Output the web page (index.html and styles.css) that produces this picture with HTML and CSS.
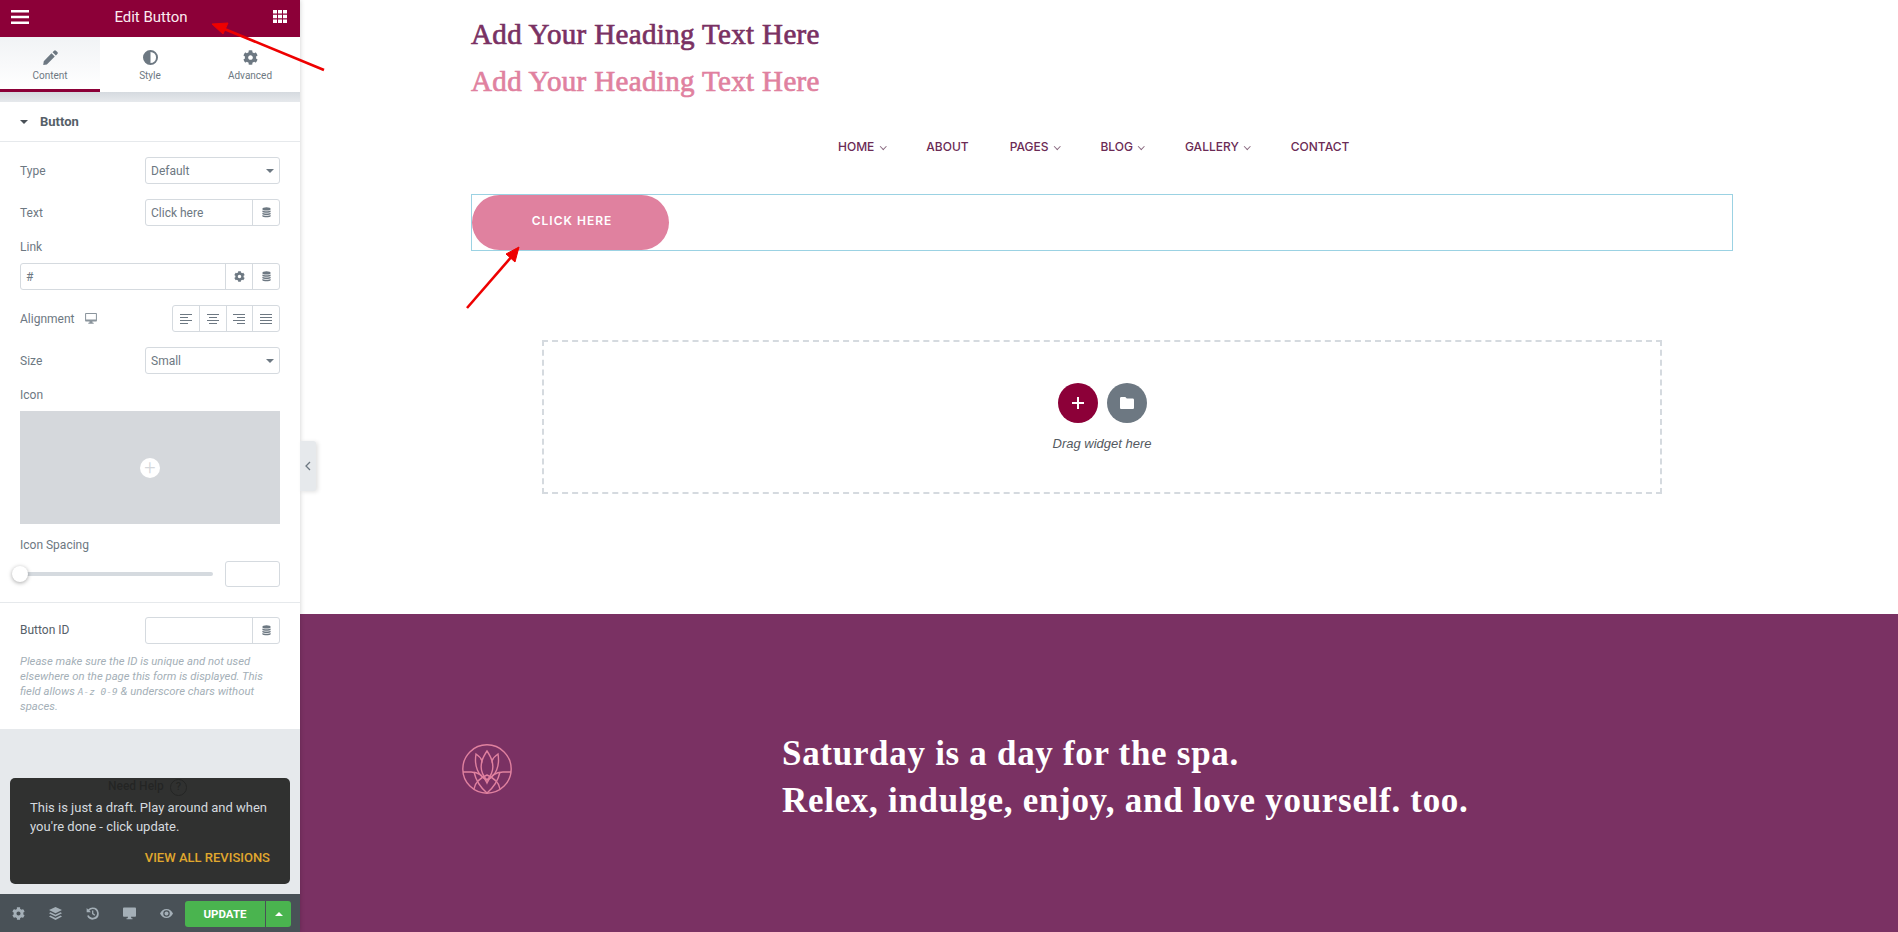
FILE: index.html
```html
<!DOCTYPE html>
<html lang="en">
<head>
  <meta charset="UTF-8">
  <meta name="viewport" content="width=device-width, initial-scale=1.0">
  <title>Edit Button</title>
  <link rel="stylesheet" href="styles.css">
</head>
<body>
  <svg class="sprite" width="0" height="0">
    <symbol id="gear" viewBox="0 0 512 512"><path d="M487.4 315.7l-42.6-24.6c4.3-23.2 4.3-47 0-70.2l42.6-24.6c4.9-2.8 7.1-8.6 5.5-14-11.1-35.6-30-67.8-54.7-94.6-3.8-4.1-10-5.1-14.8-2.3L380.8 110c-17.9-15.4-38.5-27.3-60.8-35.1V25.8c0-5.6-3.9-10.5-9.4-11.7-36.7-8.2-74.3-7.8-109.2 0-5.5 1.2-9.4 6.1-9.4 11.7V75c-22.2 7.9-42.8 19.8-60.8 35.1L88.7 85.5c-4.9-2.8-11-1.9-14.8 2.3-24.7 26.7-43.6 58.9-54.7 94.6-1.7 5.4.6 11.2 5.5 14L67.3 221c-4.3 23.2-4.3 47 0 70.2l-42.6 24.6c-4.9 2.8-7.1 8.6-5.5 14 11.1 35.6 30 67.8 54.7 94.6 3.8 4.1 10 5.1 14.8 2.3l42.6-24.6c17.9 15.4 38.5 27.3 60.8 35.1v49.2c0 5.6 3.9 10.5 9.4 11.7 36.7 8.2 74.3 7.8 109.2 0 5.5-1.2 9.4-6.1 9.4-11.7v-49.2c22.2-7.9 42.8-19.8 60.8-35.1l42.6 24.6c4.9 2.8 11 1.9 14.8-2.3 24.7-26.7 43.6-58.9 54.7-94.6 1.5-5.5-.7-11.3-5.6-14.1zM256 336c-44.1 0-80-35.9-80-80s35.9-80 80-80 80 35.9 80 80-35.9 80-80 80z"/></symbol>
    <symbol id="database" viewBox="0 0 12 14"><ellipse cx="6" cy="2.2" rx="5.500" ry="2.200"/><path d="M.5 4.400c1 1.300 10 1.300 11 0v1.500c-.6 1.700-10.400 1.700-11 0zM.5 7.400c1 1.300 10 1.300 11 0v1.500c-.6 1.700-10.400 1.700-11 0zM.5 10.400c1 1.300 10 1.300 11 0V12c-.6 1.700-10.400 1.700-11 0z"/></symbol>
    <symbol id="desktop" viewBox="0 0 14 13"><path d="M1.200 0h11.600C13.500 0 14 .5 14 1.200v7.600c0 .7-.5 1.200-1.200 1.200H8.600l.4 1.600h1.200v1.200H3.800v-1.200H5l.4-1.600H1.200C.5 10 0 9.500 0 8.800V1.200C0 .5.500 0 1.200 0zM1.200 1.200v6.600h11.600V1.200z"/></symbol>
  </svg>

  <div class="app">
    <aside class="panel">
      <header class="panel-head">
        <svg class="head-icon" viewBox="0 0 18 14"><path d="M0 0h18v2.600H0zM0 5.700h18v2.600H0zM0 11.400h18V14H0z"/></svg>
        <span class="panel-title">Edit Button</span>
        <svg class="head-icon grid-icon" viewBox="0 0 14 13"><path d="M0 0h4v3.500H0zM5 0h4v3.500H5zM10 0h4v3.500h-4zM0 4.750h4v3.500H0zM5 4.750h4v3.500H5zM10 4.750h4v3.500h-4zM0 9.500h4V13H0zM5 9.500h4V13H5zM10 9.500h4V13h-4z"/></svg>
      </header>

      <nav class="tabs">
        <div class="tab active">
          <svg class="tab-icon" viewBox="0 0 14 14"><path d="M10.300.6a1.300 1.300 0 0 1 1.800 0l1.300 1.300a1.300 1.300 0 0 1 0 1.800l-1.400 1.400-3.100-3.100zM7.900 3l3.100 3.100-7.400 7.400-3.400.5.500-3.400z"/></svg>
          <span>Content</span>
        </div>
        <div class="tab">
          <svg class="tab-icon" viewBox="0 0 14 14"><path fill-rule="evenodd" d="M7 0a7 7 0 1 1 0 14A7 7 0 0 1 7 0zm0 1.800v10.400A5.200 5.200 0 0 0 7 1.800z"/></svg>
          <span>Style</span>
        </div>
        <div class="tab">
          <svg class="tab-icon"><use href="#gear"/></svg>
          <span>Advanced</span>
        </div>
      </nav>

      <div class="panel-body">
        <section class="controls">
          <h2 class="section-title"><i class="caret-dark"></i>Button</h2>

          <div class="fields">
            <div class="row">
              <label>Type</label>
              <div class="select">Default<i class="caret"></i></div>
            </div>
            <div class="row">
              <label>Text</label>
              <div class="input-group short">
                <span class="input-text">Click here</span>
                <span class="addon"><svg class="ico-db"><use href="#database"/></svg></span>
              </div>
            </div>
            <div class="stack">
              <label>Link</label>
              <div class="input-group">
                <span class="input-text">#</span>
                <span class="addon"><svg class="ico-gear"><use href="#gear"/></svg></span>
                <span class="addon"><svg class="ico-db"><use href="#database"/></svg></span>
              </div>
            </div>
            <div class="row">
              <label>Alignment <svg class="ico-monitor"><use href="#desktop"/></svg></label>
              <div class="align-group">
                <span class="align"><svg viewBox="0 0 12 10"><path d="M0 0h12v1H0zM0 3h8v1H0zM0 6h12v1H0zM0 9h8v1H0z"/></svg></span>
                <span class="align"><svg viewBox="0 0 12 10"><path d="M0 0h12v1H0zM2 3h8v1H2zM0 6h12v1H0zM2 9h8v1H2z"/></svg></span>
                <span class="align"><svg viewBox="0 0 12 10"><path d="M0 0h12v1H0zM4 3h8v1H4zM0 6h12v1H0zM4 9h8v1H4z"/></svg></span>
                <span class="align"><svg viewBox="0 0 12 10"><path d="M0 0h12v1H0zM0 3h12v1H0zM0 6h12v1H0zM0 9h12v1H0z"/></svg></span>
              </div>
            </div>
            <div class="row">
              <label>Size</label>
              <div class="select">Small<i class="caret"></i></div>
            </div>
            <div class="stack">
              <label>Icon</label>
              <div class="icon-picker"><span class="picker-plus">+</span></div>
            </div>
            <div class="stack">
              <label>Icon Spacing</label>
              <div class="slider-row">
                <div class="slider"><i class="slider-handle"></i></div>
                <div class="number"></div>
              </div>
            </div>
          </div>

          <div class="fields id-fields">
            <div class="row">
              <label class="strong">Button ID</label>
              <div class="input-group short">
                <span class="input-text"></span>
                <span class="addon"><svg class="ico-db"><use href="#database"/></svg></span>
              </div>
            </div>
            <p class="help">Please make sure the ID is unique and not used elsewhere on the page this form is displayed. This field allows <code>A-z 0-9</code> &amp; underscore chars without spaces.</p>
          </div>
        </section>

        <div class="need-help">Need Help <span class="help-ring">?</span></div>
      </div>

      <footer class="panel-foot">
        <svg class="foot-icon"><use href="#gear"/></svg>
        <svg class="foot-icon" viewBox="0 0 14 14"><path d="M7 0l7 3.300-7 3.300-7-3.300zM1.500 5.700L7 8.300l5.500-2.600L14 6.800 7 10.100 0 6.800zM1.500 9.200L7 11.800l5.500-2.600 1.500 1.100L7 14 0 10.300z"/></svg>
        <svg class="foot-icon" viewBox="0 0 14 14"><path d="M7.200.5a6.500 6.500 0 1 1-6 9l1.700-.7a4.700 4.700 0 1 0 .7-4.900L5.300 5.600H.7V1l1.600 1.600A6.500 6.500 0 0 1 7.200.5zM6.500 3.800h1.400v3l2 1.500-.8 1.100-2.600-1.900z"/></svg>
        <svg class="foot-icon" viewBox="0 0 14 13"><path d="M1.200 0h11.600C13.500 0 14 .5 14 1.200v7.600c0 .7-.5 1.200-1.200 1.200H8.600l.4 1.600h1.200v1.200H3.800v-1.200H5l.4-1.600H1.200C.5 10 0 9.500 0 8.800V1.200C0 .5.500 0 1.200 0z"/></svg>
        <svg class="foot-icon" viewBox="0 0 16 11"><path fill-rule="evenodd" d="M8 0c3.600 0 6.500 2.300 8 5.500C14.500 8.700 11.600 11 8 11S1.500 8.700 0 5.500C1.500 2.300 4.400 0 8 0zm0 1.500a4 4 0 1 0 0 8 4 4 0 0 0 0-8zm0 1.500a2.500 2.500 0 1 1 0 5 2.500 2.500 0 0 1 0-5z"/></svg>
        <div class="update-group">
          <button class="update">UPDATE</button>
          <button class="update-more"><i class="caret-up"></i></button>
        </div>
      </footer>

      <div class="draft-tip">
        <p>This is just a draft. Play around and when you're done - click update.</p>
        <a class="tip-link">VIEW ALL REVISIONS</a>
      </div>

      <div class="collapse"><svg viewBox="0 0 6 10"><path d="M5 1L1 5l4 4" fill="none" stroke="#6d7882" stroke-width="1.300"/></svg></div>
    </aside>

    <main class="page">
      <div class="top">
        <h1 class="heading">Add Your Heading Text Here</h1>
        <h1 class="heading pink">Add Your Heading Text Here</h1>
        <ul class="menu">
          <li>HOME<i class="chev"></i></li>
          <li>ABOUT</li>
          <li>PAGES<i class="chev"></i></li>
          <li>BLOG<i class="chev"></i></li>
          <li>GALLERY<i class="chev"></i></li>
          <li>CONTACT</li>
        </ul>
        <div class="selected">
          <a class="cta">CLICK HERE</a>
        </div>
        <div class="dropzone">
          <div class="drop-buttons">
            <span class="round add">
              <svg viewBox="0 0 12 12"><path d="M5 0h2v5h5v2H7v5H5V7H0V5h5z"/></svg>
            </span>
            <span class="round tpl">
              <svg viewBox="0 0 14 12"><path d="M1.300 0h4l1.500 1.600h5.900c.7 0 1.300.6 1.300 1.300v7.800c0 .7-.6 1.300-1.300 1.300H1.300C.6 12 0 11.400 0 10.700V1.300C0 .6.600 0 1.300 0z"/></svg>
            </span>
          </div>
          <p class="drop-text">Drag widget here</p>
        </div>
      </div>

      <section class="band">
        <svg class="lotus" viewBox="0 0 50 50" fill="none" stroke="#e0819f" stroke-width="1.400">
          <circle cx="25" cy="25" r="24.200"/>
          <path d="M1 28h8c7 0 13 4 16 11 3-7 9-11 16-11h8"/>
          <path d="M12 45c1-7 6-11 13-14 7 3 12 7 13 14"/>
          <path d="M25 49c-6-5-11-12-13-21M25 49c6-5 11-12 13-21"/>
          <path d="M25 36C16 32 12 22 14 10c3 2 5 4 6 7 1-4 3-7 5-10 2 3 4 6 5 10 1-3 3-5 6-7 2 12-2 22-11 26z"/>
          <path d="M20 17c-2 7 0 14 5 19 5-5 7-12 5-19"/>
        </svg>
        <h3 class="band-text">Saturday is a day for the spa.<br>Relex, indulge, enjoy, and love yourself. too.</h3>
      </section>
    </main>
  </div>

  <svg class="arrows" viewBox="0 0 1898 932">
    <g fill="#ee0000" stroke="#ee0000">
      <path d="M324 70L222 28" stroke-width="2.600" fill="none"/>
      <path d="M212 24l16-1-5 11z" stroke-width="1"/>
      <path d="M467 308l46-53" stroke-width="2.600" fill="none"/>
      <path d="M519 247l-4 15-9-8z" stroke-width="1"/>
    </g>
  </svg>
</body>
</html>
```

FILE: styles.css
```css
* {
  box-sizing: border-box;
}

body {
  margin: 0;
  height: 932px;
  overflow: hidden;
  background-color: #fff;
  font-family: Roboto, Arial, sans-serif;
}

.sprite {
  position: absolute;
}

.app {
  display: flex;
  height: 932px;
}

/* editor panel */
.panel {
  position: relative;
  flex: 0 0 300px;
  width: 300px;
  display: flex;
  flex-direction: column;
  background-color: #e6e9ec;
  box-shadow: 0 0 5px rgba(0, 0, 0, 0.2);
  z-index: 2;
}

.panel-head {
  display: flex;
  justify-content: space-between;
  align-items: center;
  height: 37px;
  padding: 0 12px 4px 11px;
  background-color: #8c0038;
  color: #fff;
}

.panel-title {
  font-size: 15px;
  font-weight: 400;
  color: #fbeaf0;
}

.head-icon {
  width: 18px;
  height: 14px;
  fill: #fff;
}

.grid-icon {
  width: 14px;
  height: 13px;
  margin-right: 1px;
}

.tabs {
  display: flex;
  height: 55px;
  background-color: #fff;
}

.tab {
  flex: 1;
  display: flex;
  flex-direction: column;
  align-items: center;
  padding-top: 13px;
  font-size: 10px;
  color: #6d7882;
}

.tab span {
  margin-top: 5px;
}

.tab.active {
  background: linear-gradient(#f1f3f5, #fff);
  border-bottom: 3px solid #8c0038;
}

.tab-icon {
  width: 15px;
  height: 15px;
  fill: #6d7882;
}

.panel-body {
  position: relative;
  flex: 1;
  padding-top: 10px;
  background: linear-gradient(#d5dadf, #e6e9ec 10px);
}

.controls {
  height: 627px;
  background-color: #fff;
}

.section-title {
  display: flex;
  align-items: center;
  height: 40px;
  margin: 0;
  padding: 0 20px;
  border-bottom: 1px solid #e6e9ec;
  font-size: 13px;
  font-weight: 700;
  color: #556068;
}

.caret-dark {
  width: 0;
  height: 0;
  margin-right: 12px;
  border-left: 4px solid transparent;
  border-right: 4px solid transparent;
  border-top: 4px solid #495157;
}

.fields {
  display: flex;
  flex-direction: column;
  gap: 15px;
  padding: 15px 20px 0 20px;
  font-size: 12px;
  color: #6d7882;
}

.row {
  display: flex;
  justify-content: space-between;
  align-items: center;
  height: 27px;
}

.row label {
  display: flex;
  align-items: center;
  gap: 11px;
}

.row label.strong {
  padding-bottom: 2px;
  color: #556068;
}

.stack label {
  display: block;
  height: 13px;
  line-height: 13px;
}

.stack .input-group {
  margin-top: 9px;
}

.select {
  position: relative;
  width: 135px;
  height: 27px;
  padding-left: 5px;
  line-height: 26px;
  border: 1px solid #d5dadf;
  border-radius: 3px;
}

.caret {
  position: absolute;
  right: 5px;
  top: 11px;
  width: 0;
  height: 0;
  border-left: 4px solid transparent;
  border-right: 4px solid transparent;
  border-top: 4px solid #6d7882;
}

.input-group {
  display: flex;
  height: 27px;
  border: 1px solid #d5dadf;
  border-radius: 3px;
}

.input-group.short {
  width: 135px;
}

.input-text {
  flex: 1;
  padding-left: 5px;
  line-height: 26px;
}

.addon {
  display: flex;
  justify-content: center;
  align-items: center;
  width: 27px;
  border-left: 1px solid #d5dadf;
}

.ico-db {
  width: 9px;
  height: 11px;
  fill: #6d7882;
}

.ico-gear {
  width: 11px;
  height: 11px;
  fill: #6d7882;
}

.ico-monitor {
  width: 12px;
  height: 11px;
  fill: #8a949c;
}

.align-group {
  display: flex;
  width: 108px;
  height: 27px;
  border: 1px solid #d5dadf;
  border-radius: 3px;
}

.align {
  flex: 1;
  display: flex;
  justify-content: center;
  align-items: center;
  border-left: 1px solid #d5dadf;
}

.align:first-child {
  border-left: none;
}

.align svg {
  width: 12px;
  height: 10px;
  fill: #6d7882;
}

.icon-picker {
  display: flex;
  justify-content: center;
  align-items: center;
  height: 113px;
  margin-top: 9px;
  background-color: #d5d8dc;
}

.picker-plus {
  width: 20px;
  height: 20px;
  border-radius: 50%;
  background-color: #fff;
  color: #d5d8dc;
  font-size: 20px;
  font-weight: 300;
  line-height: 19px;
  text-align: center;
}

.slider-row {
  display: flex;
  justify-content: space-between;
  align-items: center;
  margin-top: 9px;
}

.slider {
  position: relative;
  width: 193px;
  height: 4px;
  border-radius: 2px;
  background-color: #d5dadf;
}

.slider-handle {
  position: absolute;
  left: -8px;
  top: -6px;
  width: 16px;
  height: 16px;
  border-radius: 50%;
  background-color: #fff;
  box-shadow: 0 1px 4px rgba(0, 0, 0, 0.35);
}

.number {
  width: 55px;
  height: 26px;
  border: 1px solid #d5dadf;
  border-radius: 3px;
}

.id-fields {
  gap: 10px;
  margin-top: 15px;
  padding-top: 14px;
  border-top: 1px solid #e6e9ec;
}

.help {
  margin: 0;
  font-size: 11.300px;
  font-style: italic;
  line-height: 15px;
  color: #a4afb7;
}

.help code {
  font-family: "DejaVu Sans Mono", monospace;
  font-size: 9.500px;
}

.need-help {
  margin-top: 49px;
  padding-left: 108px;
  font-size: 12px;
  font-weight: 500;
  line-height: 17px;
  color: #000;
}

.help-ring {
  display: inline-block;
  width: 17px;
  height: 17px;
  margin-left: 3px;
  border: 1.500px solid #000;
  border-radius: 50%;
  font-size: 11px;
  line-height: 14px;
  text-align: center;
}

.panel-foot {
  display: flex;
  align-items: center;
  height: 38px;
  padding: 0 9px 0 12px;
  background-color: #495157;
}

.foot-icon {
  flex: 0 0 13px;
  width: 13px;
  height: 13px;
  margin-right: 24px;
  fill: #a4afb7;
}

.foot-icon:nth-child(5) {
  margin-right: 0;
}

.update-group {
  display: flex;
  gap: 1px;
  margin: 2px 0 0 auto;
}

.update {
  width: 80px;
  height: 26px;
  border: none;
  border-radius: 3px 0 0 3px;
  background-color: #4ab44f;
  color: #fff;
  font-family: Roboto, Arial, sans-serif;
  font-size: 11.500px;
  font-weight: 700;
}

.update-more {
  display: flex;
  justify-content: center;
  align-items: center;
  width: 25px;
  height: 26px;
  padding: 0;
  border: none;
  border-radius: 0 3px 3px 0;
  background-color: #4ab44f;
}

.caret-up {
  width: 0;
  height: 0;
  border-left: 4px solid transparent;
  border-right: 4px solid transparent;
  border-bottom: 4px solid #fff;
}

.draft-tip {
  position: absolute;
  left: 10px;
  top: 778px;
  width: 280px;
  height: 106px;
  padding: 20px 20px 0 20px;
  border-radius: 5px;
  background-color: rgba(38, 39, 38, 0.95);
  font-size: 13px;
  line-height: 19px;
  color: #d5dadf;
}

.draft-tip p {
  margin: 0;
}

.tip-link {
  display: block;
  margin-top: 12px;
  font-weight: 500;
  text-align: right;
  color: #e0a82e;
}

.collapse {
  position: absolute;
  left: 300px;
  top: 441px;
  display: flex;
  justify-content: center;
  align-items: center;
  width: 16px;
  height: 50px;
  border-radius: 0 3px 3px 0;
  background-color: #e6e9ec;
  box-shadow: 2px 1px 4px rgba(0, 0, 0, 0.12);
}

.collapse svg {
  width: 6px;
  height: 10px;
}

/* page */
.page {
  flex: 1;
  display: flex;
  flex-direction: column;
}

.top {
  flex: 0 0 614px;
  padding: 16px 0 0 171px;
}

.heading {
  margin: 0 0 11px 0;
  font-family: "Liberation Serif", serif;
  font-size: 29px;
  font-weight: 400;
  line-height: 36px;
  letter-spacing: 0.35px;
  -webkit-text-stroke: 0.7px currentColor;
  color: #7a3163;
}

.heading.pink {
  color: #e0819f;
}

.menu {
  display: flex;
  gap: 41px;
  margin: 0;
  padding: 28px 0 0 367px;
  list-style: none;
  font-family: Inter, Arial, sans-serif;
  font-size: 12px;
  font-weight: 500;
  line-height: 18px;
  color: #6b2b55;
}

.menu li {
  display: flex;
  align-items: center;
}

.chev {
  width: 4.500px;
  height: 4.500px;
  margin: 0 0 2px 6.500px;
  border-right: 1px solid #8a6a80;
  border-bottom: 1px solid #8a6a80;
  transform: rotate(45deg);
}

.selected {
  width: 1262px;
  height: 57px;
  margin-top: 38px;
  border: 1px solid #9bd2e3;
}

.cta {
  display: block;
  width: 197px;
  height: 55px;
  padding: 18px 0 0 3px;
  border-radius: 28px;
  background-color: #e0819f;
  color: #fff;
  font-family: Inter, Arial, sans-serif;
  font-size: 12px;
  font-weight: 600;
  letter-spacing: 1px;
  text-align: center;
}

.dropzone {
  width: 1120px;
  height: 154px;
  margin: 89px 0 0 71px;
  padding-top: 41px;
  border: 2px dashed #d5dadf;
}

.drop-buttons {
  display: flex;
  justify-content: center;
  gap: 9px;
}

.round {
  display: flex;
  justify-content: center;
  align-items: center;
  width: 40px;
  height: 40px;
  border-radius: 50%;
  fill: #fff;
}

.round.add {
  background-color: #8c0038;
}

.round.add svg {
  width: 12px;
  height: 12px;
}

.round.tpl {
  background-color: #6d7882;
}

.round.tpl svg {
  width: 14px;
  height: 12px;
}

.drop-text {
  margin: 13px 0 0 0;
  font-family: "Liberation Sans", Arial, sans-serif;
  font-size: 13px;
  font-style: italic;
  line-height: 16px;
  text-align: center;
  color: #54595f;
}

.band {
  flex: 1;
  display: flex;
  align-items: flex-start;
  padding: 116px 0 0 162px;
  background-color: #7a3163;
}

.lotus {
  flex: 0 0 50px;
  width: 50px;
  height: 50px;
  margin-top: 14px;
}

.band-text {
  margin: 0 0 0 270px;
  font-family: "Liberation Serif", serif;
  font-size: 35px;
  font-weight: 700;
  line-height: 47px;
  letter-spacing: 0.7px;
  color: #fff;
}

.arrows {
  position: absolute;
  left: 0;
  top: 0;
  width: 1898px;
  height: 932px;
  pointer-events: none;
  z-index: 3;
}
```
